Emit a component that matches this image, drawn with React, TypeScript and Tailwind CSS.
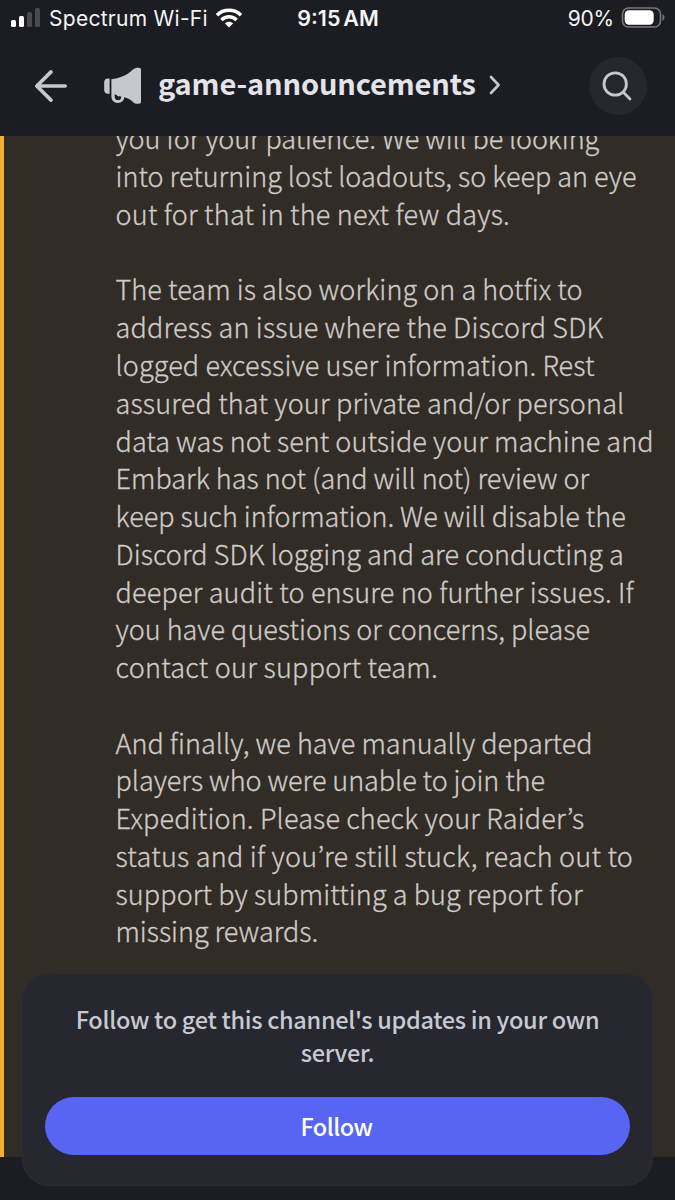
type Line = { text: string; tracking: string };

const paragraphs: Line[][] = [
  [
    { text: "you for your patience. We will be looking", tracking: "tracking-[-0.111px]" },
    { text: "into returning lost loadouts, so keep an eye", tracking: "tracking-[-0.002px]" },
    { text: "out for that in the next few days.", tracking: "tracking-[0.22px]" },
  ],
  [
    { text: "The team is also working on a hotfix to", tracking: "tracking-[0.076px]" },
    { text: "address an issue where the Discord SDK", tracking: "tracking-[0.167px]" },
    { text: "logged excessive user information. Rest", tracking: "tracking-[0.12px]" },
    { text: "assured that your private and/or personal", tracking: "tracking-[0.168px]" },
    { text: "data was not sent outside your machine and", tracking: "tracking-[0.05px]" },
    { text: "Embark has not (and will not) review or", tracking: "tracking-[0.023px]" },
    { text: "keep such information. We will disable the", tracking: "tracking-[-0.01px]" },
    { text: "Discord SDK logging and are conducting a", tracking: "tracking-[0.04px]" },
    { text: "deeper audit to ensure no further issues. If", tracking: "tracking-[0.181px]" },
    { text: "you have questions or concerns, please", tracking: "tracking-[0.008px]" },
    { text: "contact our support team.", tracking: "tracking-[0.26px]" },
  ],
  [
    { text: "And finally, we have manually departed", tracking: "tracking-[0.04px]" },
    { text: "players who were unable to join the", tracking: "tracking-[-0.048px]" },
    { text: "Expedition. Please check your Raider’s", tracking: "tracking-[0.159px]" },
    { text: "status and if you’re still stuck, reach out to", tracking: "tracking-[0.25px]" },
    { text: "support by submitting a bug report for", tracking: "tracking-[0.094px]" },
    { text: "missing rewards.", tracking: "tracking-[-0.045px]" },
  ],
];

function StatusBar() {
  return (
    <div className="grid h-[37px] grid-cols-3 items-center pl-[11px] pr-[10px] font-['Inter',sans-serif] text-[21px] leading-[37px] text-[#f4f4f6]">
      <div className="flex items-center whitespace-nowrap">
        <div className="-mt-[2px] flex h-[19px] items-end gap-[3px]">
          <span className="h-[7px] w-[5px] rounded-[1.5px] bg-white" />
          <span className="h-[11px] w-[5px] rounded-[1.5px] bg-white" />
          <span className="h-[15px] w-[5px] rounded-[1.5px] bg-[#4a4b50]" />
          <span className="h-[19px] w-[5px] rounded-[1.5px] bg-[#4a4b50]" />
        </div>
        <span className="ml-[9px] tracking-[0.28px]">Spectrum Wi-Fi</span>
        <svg className="-mt-[1px] ml-[7px] shrink-0" width="28" height="20" viewBox="0 0 28 20" fill="none" stroke="#fff">
          <path d="M2 7.2C8.6 .6 19.4 .6 26 7.2" strokeWidth="3.6" />
          <path d="M6.4 11.9C10.700 7.700 17.300 7.700 21.600 11.900" strokeWidth="3.500" />
          <path d="M14 19.600l-4.200-4.300c2.300-2.200 6.100-2.200 8.400 0z" fill="#fff" stroke="none" />
        </svg>
      </div>
      <span className="text-center text-[21.5px] font-semibold [word-spacing:-2.5px]">9:15 AM</span>
      <div className="flex items-center justify-end">
        <span className="mr-[7px] tracking-[-0.2px]">90%</span>
        <svg className="-mt-[2px]" width="44" height="21" viewBox="0 0 44 21">
          <rect x="1.500" y="1" width="38" height="19" rx="6" fill="none" stroke="#77787c" strokeWidth="1.600" />
          <rect x="3.700" y="3.200" width="29" height="14.600" rx="4.200" fill="#fff" />
          <path d="M41.500 7.200c2.600 1 2.600 5.600 0 6.600z" fill="#77787c" />
        </svg>
      </div>
    </div>
  );
}

function ChannelBar() {
  return (
    <div className="flex h-[98px] items-center pl-[34px] pr-[28px]">
      <svg className="shrink-0" width="34" height="32" viewBox="0 0 34 32" fill="none" stroke="#c7c8ce" strokeWidth="3.600" strokeLinecap="round" strokeLinejoin="round">
        <path d="M17 1.900L2.800 16L17 30.100M3.200 16H31.200" />
      </svg>
      <svg className="ml-[36px] shrink-0" width="38" height="38" viewBox="0 0 38 38" fill="#c7c8ce">
        <path d="M5.600 11.600v15.200H4C1.500 26.800.200 25.300.200 23v-7.600c0-2.400 1.300-3.800 3.800-3.800z" />
        <path
          fillRule="evenodd"
          d="M7.400 12.200C15 11.600 23 8.500 29 2.600C30.500 1.200 32 .800 34 .800h1c1.300 0 2 .800 2 2v32c0 1.300-.700 2-2 2h-1.300c-1.900 0-3.200-.500-4.700-1.900c-2.600-2.500-5.300-4.100-8.700-4.700c-.500 3.600-3.100 5.700-6.300 5.700c-3.900 0-6.600-2.700-6.600-6.700zM10.700 27.200v2.200c0 2.200 1.300 3.700 3.400 3.700c2 0 3.200-1.500 3.200-3.400c-.900-.500-1.900-.500-2.900-.300c-1.200.100-1.200-2-3.700-2.200z"
        />
      </svg>
      <h1 className="ml-[16px] -mt-[8px] whitespace-nowrap font-['Noto_Sans_CJK_JP',sans-serif] text-[29px] font-bold leading-[42px] tracking-[-0.14px] text-[#e3e4ea]">
        game-announcements
      </h1>
      <svg className="ml-[13px] -mt-[3px] shrink-0" width="12" height="20" viewBox="0 0 12 20" fill="none" stroke="#c7c8ce" strokeWidth="2.600" strokeLinecap="round" strokeLinejoin="round">
        <path d="M2 2l7.600 8L2 18" />
      </svg>
      <button className="ml-auto flex size-[58px] shrink-0 items-center justify-center rounded-full bg-[#25272f]">
        <svg className="-ml-[2px] -mt-[1px]" width="30" height="30" viewBox="0 0 30 30" fill="none" stroke="#c7c8ce" strokeWidth="2.800" strokeLinecap="round">
          <circle cx="13.200" cy="13" r="11.200" />
          <path d="M21.300 21.200L28 28" />
        </svg>
      </button>
    </div>
  );
}

export default function App() {
  return (
    <div className="relative flex h-[1200px] w-[675px] flex-col overflow-hidden bg-[#1c1d22]">
      <header className="h-[136px] shrink-0">
        <StatusBar />
        <ChannelBar />
      </header>
      <main className="h-[1021px] shrink-0 overflow-hidden border-l-4 border-[#f3b032] bg-[#312c26] pl-[111.5px]">
        <div className="-mt-[16.600px] flex flex-col gap-[37.760px] whitespace-nowrap font-['Noto_Sans_CJK_JP',sans-serif] text-[27px] font-light leading-[37.760px] text-[#cfcbc8] [-webkit-text-stroke:0.3px]">
          {paragraphs.map((lines, i) => (
            <p key={i}>
              {lines.map((line) => (
                <span key={line.text} className={`block ${line.tracking}`}>
                  {line.text}
                </span>
              ))}
            </p>
          ))}
        </div>
      </main>
      <section className="absolute inset-x-[22px] top-[973px] flex h-[213px] flex-col rounded-[27px] border border-[#2b2d34] bg-[#26272f] px-[22px] pt-[29px] text-center font-['Noto_Sans_CJK_JP',sans-serif] text-[23.5px] font-medium leading-[33px]">
        <p className="tracking-[-0.3px] text-[#c8c9d1]">
          Follow to get this channel's updates in your own
          <br />
          server.
        </p>
        <button className="mt-[28px] h-[58px] shrink-0 rounded-full bg-[#5865f2] pr-[2px] pt-px tracking-[-0.5px] text-white">Follow</button>
      </section>
    </div>
  );
}
